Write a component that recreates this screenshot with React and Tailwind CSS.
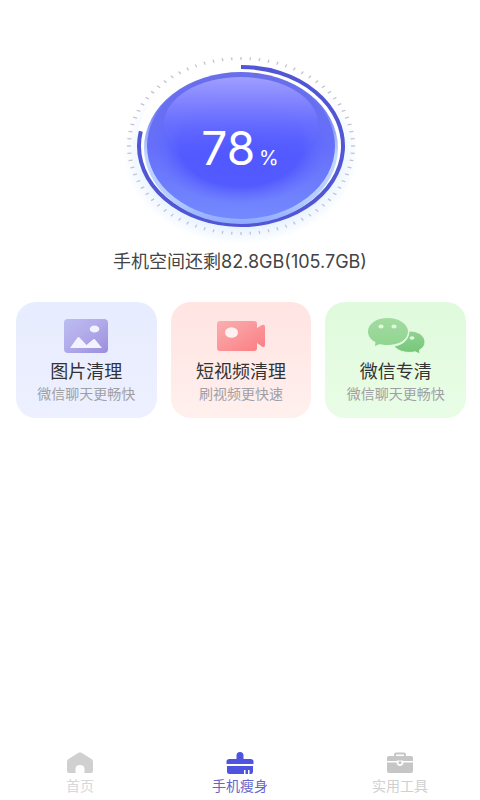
const TICKS = Array.from({ length: 76 }, (_, i) => (i / 76) * Math.PI * 2);

function Gauge({ percent }) {
  const cx = 121;
  const cy = 98;
  // The arc starts at twelve o'clock and runs clockwise
  const end = (percent / 100) * Math.PI * 2 - Math.PI / 2;
  const endX = cx + 102 * Math.cos(end);
  const endY = cy + 79 * Math.sin(end);

  return (
    <div className="relative">
      <svg width="240" height="196" viewBox="0 0 240 196" aria-hidden="true">
        <defs>
          <linearGradient id="rim" x1="0" y1="0" x2="0" y2="1">
            <stop offset="0" stopColor="#6a6ee8" />
            <stop offset="0.25" stopColor="#6c78f4" />
            <stop offset="0.55" stopColor="#c3d8ff" />
            <stop offset="0.85" stopColor="#b4ccff" />
            <stop offset="1" stopColor="#8ea8ff" />
          </linearGradient>
          <linearGradient id="ball" x1="0" y1="0" x2="0" y2="1">
            <stop offset="0" stopColor="#696ee9" />
            <stop offset="0.5" stopColor="#656ffa" />
            <stop offset="1" stopColor="#7489ff" />
          </linearGradient>
          <radialGradient id="core" cx="0.5" cy="0.5" r="0.5">
            <stop offset="0" stopColor="#5056ff" />
            <stop offset="0.7" stopColor="#535bff" />
            <stop offset="1" stopColor="#606bff" stopOpacity="0" />
          </radialGradient>
          <linearGradient id="gloss" x1="0" y1="0" x2="0" y2="1">
            <stop offset="0" stopColor="#9f9eff" />
            <stop offset="0.25" stopColor="#8384ff" />
            <stop offset="0.5" stopColor="#6a70ff" stopOpacity="0.8" />
            <stop offset="0.85" stopColor="#5a60ff" stopOpacity="0" />
          </linearGradient>
          <radialGradient id="glow" cx="0.5" cy="0.5" r="0.5">
            <stop offset="0.82" stopColor="#e8f3ff" />
            <stop offset="1" stopColor="#e8f3ff" stopOpacity="0" />
          </radialGradient>
        </defs>

        <ellipse cx={cx} cy={cy + 8} rx="118" ry="90" fill="url(#glow)" />
        <ellipse cx={cx} cy={cy - 4} rx="104" ry="80" fill="#fff" />
        {TICKS.map((a) => (
          <line
            key={a}
            x1={cx + 110 * Math.cos(a)}
            y1={cy + 86 * Math.sin(a)}
            x2={cx + 114 * Math.cos(a)}
            y2={cy + 89 * Math.sin(a)}
            stroke="#c2c3d0"
            strokeWidth="1.3"
          />
        ))}
        <path
          d={`M${cx} ${cy - 79} A102 79 0 ${percent > 50 ? 1 : 0} 1 ${endX} ${endY}`}
          fill="none"
          stroke="#5056d4"
          strokeWidth="4"
        />
        <ellipse cx={cx} cy={cy + 2} rx="97" ry="76" fill="url(#rim)" />
        <ellipse cx={cx} cy={cy} rx="94" ry="73" fill="url(#ball)" />
        <ellipse cx={cx} cy={cy} rx="88" ry="58" fill="url(#core)" />
        <ellipse cx={cx} cy={cy - 22} rx="77" ry="47" fill="url(#gloss)" />
      </svg>
      <div className="absolute inset-0 flex items-center justify-center pt-1 text-white">
        <p className="flex items-baseline gap-1 font-[Inter,sans-serif]">
          <span className="text-[46px]">{percent}</span>
          <span className="text-xl">%</span>
        </p>
      </div>
    </div>
  );
}

function PictureIcon() {
  return (
    <svg width="44" height="34" viewBox="0 0 44 34" aria-hidden="true">
      <defs>
        <linearGradient id="picture" x1="0" y1="0" x2="1" y2="1">
          <stop offset="0" stopColor="#bbbcf2" />
          <stop offset="0.4" stopColor="#b4aeeb" />
          <stop offset="1" stopColor="#9a8edd" />
        </linearGradient>
      </defs>
      <rect width="44" height="34" rx="4" fill="url(#picture)" />
      <ellipse cx="30.5" cy="10" rx="4.8" ry="3.6" fill="#f3f2ff" />
      <path d="M6 29 L13.5 18.5 Q14.5 17.5 15.5 18.5 L22.5 26 L29 20.5 Q30.5 19.5 31.5 21 L38 29 Z" fill="#f3f2ff" />
    </svg>
  );
}

function VideoIcon() {
  return (
    <svg width="48" height="34" viewBox="0 0 48 34" aria-hidden="true">
      <defs>
        <linearGradient id="video" x1="0" y1="0" x2="1" y2="1">
          <stop offset="0" stopColor="#f9b0b0" />
          <stop offset="1" stopColor="#fb7c82" />
        </linearGradient>
      </defs>
      <path d="M3 2 H37 Q40 2 40 5 V9 L45 6 Q48 5 48 8 V26 Q48 29 45 27.5 L40 24 V29 Q40 32 37 32 H3 Q0 32 0 29 V5 Q0 2 3 2 Z" fill="url(#video)" />
      <ellipse cx="14.5" cy="13.5" rx="6.5" ry="5.3" fill="#fff1ef" />
    </svg>
  );
}

function WechatIcon() {
  return (
    <svg width="58" height="36" viewBox="0 0 58 36" aria-hidden="true">
      <defs>
        <linearGradient id="chatBack" x1="0" y1="0" x2="0" y2="1">
          <stop offset="0" stopColor="#a3dba0" />
          <stop offset="1" stopColor="#90d591" />
        </linearGradient>
        <linearGradient id="chatFront" x1="0" y1="0" x2="0" y2="1">
          <stop offset="0" stopColor="#92d291" />
          <stop offset="1" stopColor="#74c67a" />
        </linearGradient>
      </defs>
      <path d="M20.5 0 C9 0 1 6 1 13.5 C1 18 4 22 8.500 24 L8 28 L13 26 C15 26.800 17.500 27 20.5 27 C32 27 41 22 41 13.5 C41 6 32 0 20.5 0 Z" fill="url(#chatBack)" />
      <path d="M43 13 C51 13 58 17.5 58 24 C58 27.5 56 30 52.5 32 L53 36 L48 33.8 C46 34.4 45 34.4 43 34.4 C35 34.4 30 32 27 28 C36 27 42 21 42 13 Z" fill="url(#chatFront)" stroke="#e4fbe1" strokeWidth="1" />
      <ellipse cx="14" cy="8.5" rx="2.6" ry="2" fill="#e0f8dd" />
      <ellipse cx="27" cy="8.5" rx="2.6" ry="2" fill="#e0f8dd" />
      <ellipse cx="45" cy="20" rx="2.4" ry="1.8" fill="#e0f8dd" />
    </svg>
  );
}

function HomeIcon() {
  return (
    <svg width="26" height="22" viewBox="0 0 26 22" fill="#d0d0d0" aria-hidden="true">
      <path d="M11.5 0.8 Q13 -0.2 14.5 0.8 L24.8 7.2 Q26 8 26 9.5 V19 Q26 21 24 21 H17.5 V17 Q17.5 13 13 13 Q8.5 13 8.5 17 V21 H2 Q0 21 0 19 V9.5 Q0 8 1.2 7.2 Z" />
    </svg>
  );
}

function BrushIcon() {
  return (
    <svg width="28" height="22" viewBox="0 0 28 22" fill="#4f54e0" aria-hidden="true">
      <path d="M10.5 7 V3.5 Q10.5 0 14 0 Q17.5 0 17.5 3.5 V7 H24.5 Q27.5 7 27.5 9.5 V12 H0.5 V9.5 Q0.5 7 3.5 7 Z" />
      <path d="M1 14 H27 V19.5 Q27 22 25 22 H23.5 V18 H22 V22 H19.5 V18 H18 V22 H3.5 Q1 22 1 19.5 Z" />
    </svg>
  );
}

function ToolboxIcon() {
  return (
    <svg width="26" height="22" viewBox="0 0 26 22" fill="#c6c6c6" aria-hidden="true">
      <path d="M7 4 V2.5 Q7 0.5 9 0.5 H17 Q19 0.5 19 2.5 V4 H24 Q26 4 26 6 V9 H16 V8.5 H10 V9 H0 V6 Q0 4 2 4 Z M9 4 H17 V2.5 H9 Z" fillRule="evenodd" />
      <path d="M0 10.5 H9.5 Q10 14 13 14 Q16 14 16.5 10.5 H26 V19 Q26 21 24 21 H2 Q0 21 0 19 Z" />
      <path d="M11.5 9.5 H14.5 V11.5 Q13 13 11.5 11.5 Z" />
    </svg>
  );
}

const cards = [
  { title: "图片清理", note: "微信聊天更畅快", icon: PictureIcon, color: "from-[#e7ecfe] to-[#edf0ff]" },
  { title: "短视频清理", note: "刷视频更快速", icon: VideoIcon, color: "from-[#ffe4e2] to-[#fff0ee]" },
  { title: "微信专清", note: "微信聊天更畅快", icon: WechatIcon, color: "from-[#dffadc] to-[#e9fde6]" },
];

const tabs = [
  { label: "首页", icon: HomeIcon, color: "text-[#d8d8dc]" },
  { label: "手机瘦身", icon: BrushIcon, color: "text-[#6366cf]", active: true },
  { label: "实用工具", icon: ToolboxIcon, color: "text-[#d0d0d0]" },
];

export default function App() {
  return (
    <div className="flex min-h-screen flex-col bg-white font-['Inter','Noto_Sans_CJK_SC',sans-serif]">
      <main className="flex flex-1 flex-col items-center pt-12">
        <Gauge percent={78} />
        <h1 className="mt-1 text-lg leading-7 text-[#444]">手机空间还剩82.8GB(105.7GB)</h1>

        <div className="mt-[26px] grid w-full grid-cols-3 gap-3.5 pr-3.5 pl-4">
          {cards.map(({ title, note, icon: Icon, color }) => (
            <button
              key={title}
              type="button"
              className={`flex flex-col items-center rounded-[20px] bg-linear-to-b pt-4 pb-4 ${color}`}
            >
              <span className="flex h-9 items-center">
                <Icon />
              </span>
              <span className="mt-1 text-lg leading-7 text-[#333]">{title}</span>
              <span className="text-sm leading-4 text-[#a0a0a4]">{note}</span>
            </button>
          ))}
        </div>
      </main>

      <nav className="grid grid-cols-3 pb-1">
        {tabs.map(({ label, icon: Icon, color, active }) => (
          <a
            key={label}
            href="#"
            aria-current={active ? "page" : undefined}
            className={`flex flex-col items-center gap-0.5 text-sm leading-5 ${color}`}
          >
            <Icon />
            {label}
          </a>
        ))}
      </nav>
    </div>
  );
}
